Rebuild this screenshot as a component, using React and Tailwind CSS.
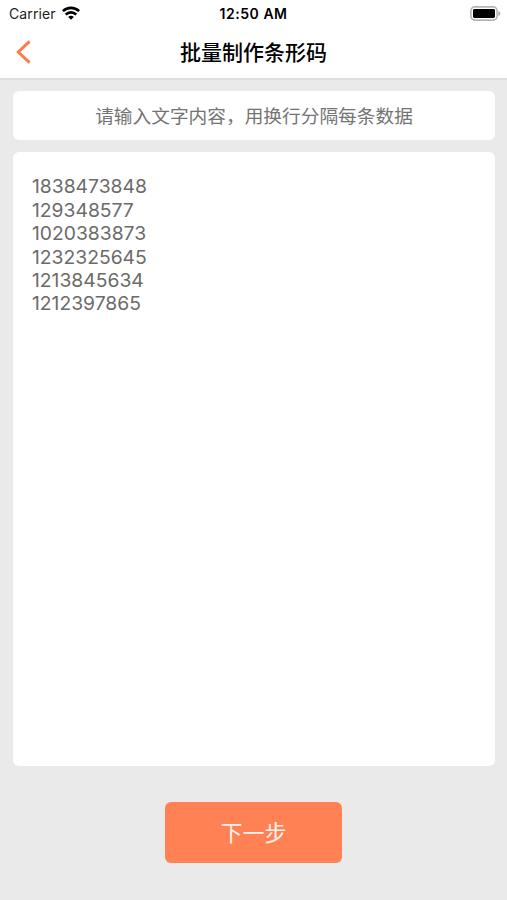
const codes = [
  "1838473848",
  "129348577",
  "1020383873",
  "1232325645",
  "1213845634",
  "1212397865",
];

function WifiIcon() {
  return (
    <svg width="18" height="14" viewBox="0 0 18 14" className="mb-[2px]" fill="none" stroke="#000" strokeWidth="2.6">
      <path d="M0.9 5.1a11.7 11.7 0 0 1 16.2 0" />
      <path d="M3.7 8.6a7.5 7.5 0 0 1 10.6 0" />
      <path d="M9 13.8l-2.8-2.8a3.9 3.9 0 0 1 5.6 0z" fill="#000" stroke="none" />
    </svg>
  );
}

function BatteryIcon() {
  return (
    <svg width="31" height="15" viewBox="0 0 31 15">
      <rect x="0.9" y="0.9" width="26.2" height="13.2" rx="3.8" fill="#fff" stroke="#b5b5b5" strokeWidth="1.6" />
      <rect x="3" y="3" width="22" height="9" rx="1.4" fill="#000" />
      <path d="M28.4 5c2.6 1 2.6 4 0 5z" fill="#a8a8a8" />
    </svg>
  );
}

function StatusBar() {
  return (
    <div className="grid h-[27px] grid-cols-[1fr_auto_1fr] items-center pl-[7px] pr-[7px] text-black">
      <div className="flex items-center gap-[6px] pl-[2px]">
        <span className="text-[14px] tracking-[0.1px] text-[#222]">Carrier</span>
        <WifiIcon />
      </div>
      <div className="text-center text-[14px] font-semibold tracking-[0.55px] whitespace-nowrap">12:50 AM</div>
      <div className="mr-[-1px] flex justify-end">
        <BatteryIcon />
      </div>
    </div>
  );
}

function NavBar() {
  return (
    <div className="grid h-[53px] grid-cols-[60px_1fr_60px] items-center border-b-2 border-[#dfdfdf]">
      <button aria-label="返回" className="pb-[2px] pl-[16px]">
        <svg width="16" height="24" viewBox="0 0 16 24" fill="none" stroke="#fb7c50" strokeWidth="3">
          <path d="M13.6 1.4L2.3 12l11.3 10.6" />
        </svg>
      </button>
      <h1 className="text-center text-[21px] font-medium text-black">批量制作条形码</h1>
    </div>
  );
}

export default function App() {
  return (
    <div className="flex h-[900px] w-full flex-col bg-[#eaeaea] font-['Inter','Noto_Sans_CJK_SC',sans-serif]">
      <header className="bg-white">
        <StatusBar />
        <NavBar />
      </header>

      <main className="flex flex-1 flex-col px-[13px] pt-[11px] pb-[37px]">
        <div className="mr-[-1px] flex h-[49px] items-center justify-center rounded-[6px] bg-white pt-[3px] text-[18.7px] text-[#747474]">
          请输入文字内容，用换行分隔每条数据
        </div>

        <div className="mt-[12px] mr-[-1px] h-[614px] rounded-[6px] bg-white px-[19px] pt-[23.4px] text-[19.3px] leading-[23.4px] text-[#6b6b6b]">
          {codes.map((code) => (
            <div key={code}>{code}</div>
          ))}
        </div>

        <button className="mt-[36px] h-[61px] w-[177px] self-center rounded-[6px] bg-[#ff8154] pt-[2px] text-[22px] text-white/90">
          下一步
        </button>
      </main>
    </div>
  );
}
